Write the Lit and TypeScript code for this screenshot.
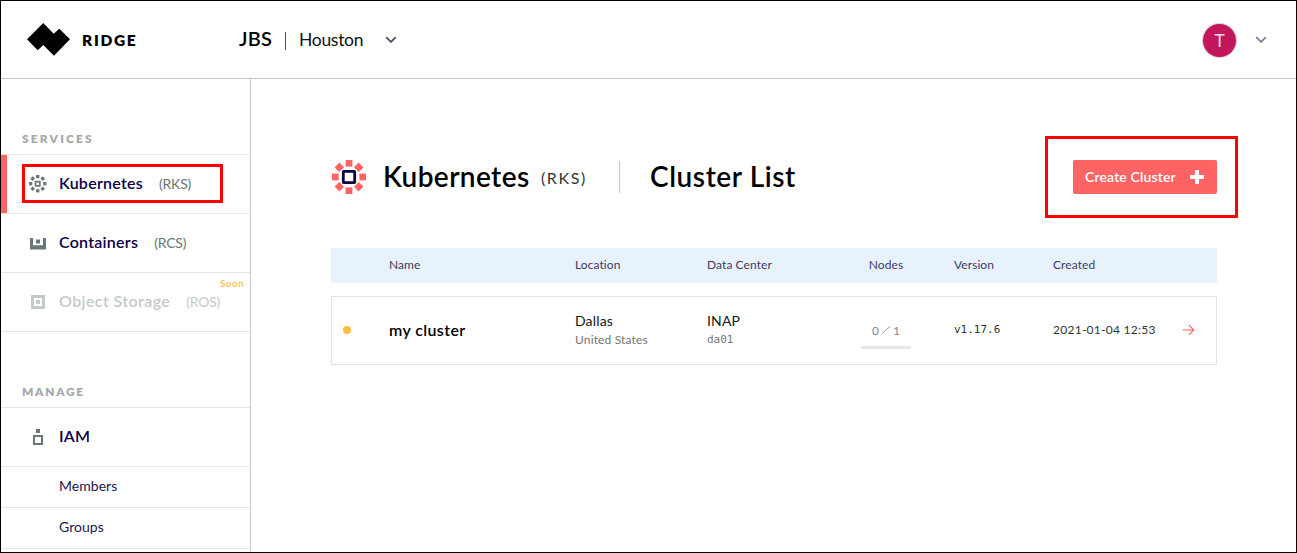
import { LitElement, html, svg, css } from "lit";
import { classMap } from "lit/directives/class-map.js";

const ring = [0, 45, 90, 135, 180, 225, 270, 315];

const chevron = svg`<path d="M1.2 1.2 6 6 10.8 1.2" fill="none" stroke="currentColor" stroke-width="1.9"/>`;

const icons: Record<string, unknown> = {
  kubernetes: html`<svg width="20" height="20" viewBox="0 0 20 20" fill="#6b7879">
    ${ring.map((a) => svg`<rect x="8" y="1" width="3.4" height="3.2" transform="rotate(${a} 9.7 9.7)"/>`)}
    <path fill-rule="evenodd" d="M6.7 6.7h6v6h-6zM8.4 8.4v2.6h2.6V8.4z"/></svg>`,
  containers: html`<svg width="20" height="20" viewBox="0 0 20 20" fill="#6b7879">
    <path d="M2 5h3v7.2h10V5h3v11.4H2z"/><rect x="8" y="6.5" width="4" height="4"/></svg>`,
  storage: html`<svg width="20" height="20" viewBox="0 0 20 20" fill="#c4c9c9">
    <path fill-rule="evenodd" d="M3 3h14v14H3zM6 6v8h8V6z"/><rect x="8" y="8" width="4" height="4"/></svg>`,
  iam: html`<svg width="20" height="20" viewBox="0 0 20 20" fill="#6b7879">
    <rect x="8" y="2" width="4" height="4"/><path fill-rule="evenodd" d="M5 8h10v10H5zM7 10v6h6v-6z"/></svg>`,
};

class AppRoot extends LitElement {
  static styles = css`
    :host { display: block; font-family: Lato, "Open Sans", sans-serif; color: #000; }
    * { box-sizing: border-box; }
    svg { display: block; flex: none; }
    .frame { width: 1297px; height: 553px; border: 1px solid #000; background: #fff; overflow: hidden; display: flex; flex-direction: column; }
    header { height: 78px; flex: none; border-bottom: 1px solid #c6c6c6; display: flex; align-items: center; padding: 0 29px 0 26px; white-space: nowrap; }
    .brand { font-size: 15.5px; font-weight: 800; letter-spacing: 1.7px; margin: 0 0 0 12px; width: 157px; }
    .org { font-size: 20px; font-weight: 600; letter-spacing: .17px; margin-top: -3px; width: 46px; }
    .bar { width: 1px; height: 18px; background: #6b4a10; margin-top: 3px; }
    .site { font-size: 17.5px; letter-spacing: -.3px; margin: -1px 0 0 13px; width: 86px; color: #111; }
    .chev { color: #4d5a6b; }
    .chev.light { color: #7688a0; margin-left: 19px; }
    .avatar { margin-left: auto; width: 33px; height: 33px; border-radius: 50%; background: #c2185b; box-shadow: 0 0 0 1px #d4cdd2; color: #f6dce6; font: 18px/34px Roboto, sans-serif; text-align: center; margin-top: 1px; }
    .body { flex: 1; display: flex; min-height: 0; }
    nav { width: 250px; flex: none; border-right: 1px solid #c6c6c6; overflow: hidden; }
    .group { padding: 52px 0 7px 21px; border-bottom: 1px solid #e6e6e6; font-size: 11.8px; font-weight: 800; line-height: 16px; letter-spacing: 2.25px; color: #a3a9a9; }
    .group.manage { letter-spacing: 1.75px; }
    .item { position: relative; height: 59px; border-bottom: 1px solid #e6e6e6; display: flex; align-items: center; padding-left: 27px; white-space: nowrap; color: #0b0046; }
    .item b { font-size: 16px; font-weight: 600; letter-spacing: .25px; margin: -3px 0 0 11px; }
    .item i { font-style: normal; font-size: 14px; letter-spacing: -.2px; color: #6a7375; margin: -1px 0 0 16px; }
    .item.active::before { content: ""; position: absolute; left: 0; top: 0; width: 6px; height: 58px; background: #ff6464; }
    .item.off, .item.off i { color: #c4c9c9; }
    .item.off b { letter-spacing: .4px; }
    .soon { position: absolute; right: 6px; top: 3px; font-size: 10px; line-height: 14px; font-weight: 600; letter-spacing: .38px; color: #ffbc52; }
    .sub { height: 41px; border-bottom: 1px solid #e6e6e6; padding-left: 58px; font-size: 14px; line-height: 37px; letter-spacing: .04px; color: #1e1550; }
    .mark { position: absolute; border: 3px solid #f00; pointer-events: none; }
    .mark.menu { left: 21px; top: 9px; width: 201px; height: 39px; }
    .mark.cta { inset: -24px -21px -24px -28px; }
    main { flex: 1; padding: 81px 79px 0 80px; }
    .head { display: flex; align-items: center; height: 34px; white-space: nowrap; }
    h1 { margin: 0; font-size: 28px; line-height: 34px; font-weight: 600; letter-spacing: .4px; }
    .title { margin: -2px 0 0 16px; width: 158px; }
    .abbr { font-size: 16px; letter-spacing: 1.6px; color: #333; margin-top: 1px; width: 78px; }
    .split { width: 1px; height: 32px; background: #c9c9c9; margin-right: 30px; }
    .list { letter-spacing: .58px; margin-top: -2px; }
    .cta-wrap { position: relative; margin-left: auto; }
    button { display: flex; align-items: center; justify-content: space-between; width: 144px; height: 34px; padding: 0 13px 0 12px; border: 0; border-radius: 2px; background: #ff6464; color: #fff; font: 600 14px Lato, sans-serif; letter-spacing: .14px; }
    .cta-text { margin-top: -2px; }
    .cols { display: grid; grid-template-columns: 58px 186px 132px 154px 93px 99px 129px 1fr; align-items: center; }
    .thead { margin-top: 54px; height: 35px; padding-bottom: 2px; background: #e8f2fc; font-size: 12px; letter-spacing: .08px; color: #3f3966; }
    .row { margin-top: 13px; height: 69px; padding-bottom: 2px; border: 1px solid #e4e4e4; grid-template-columns: 57px 186px 132px 154px 93px 99px 129px 1fr; }
    .mid { width: 50px; text-align: center; }
    .dot { width: 8px; height: 8px; border-radius: 50%; background: #ffbc40; margin: 1px 0 0 11px; }
    .name { font-size: 16px; font-weight: 600; letter-spacing: .38px; margin-top: -1px; }
    .two { font-size: 14px; line-height: 19px; letter-spacing: .15px; color: #161616; }
    .two small { display: block; font-size: 12px; color: #747474; }
    .two small.mono, .mono { font-family: "DejaVu Sans Mono", monospace; font-size: 11px; letter-spacing: 0; }
    .nodes { display: flex; justify-content: center; align-items: center; gap: 2px; height: 36px; font-size: 12px; color: #858b8b; border-bottom: 3px solid #e6e6e6; padding-top: 2px; margin-top: 2px; }
    .date { font-size: 12px; letter-spacing: .26px; white-space: nowrap; color: #333; }
    .ver { color: #333; }
  `;

  item(icon: string, label: string, abbr: string, state = "") {
    return html`<div class=${classMap({ item: true, active: state === "active", off: state === "off" })}>
      ${icons[icon]}<b>${label}</b>${abbr ? html`<i>${abbr}</i>` : ""}
      ${state === "active" ? html`<span class="mark menu"></span>` : ""}
      ${state === "off" ? html`<span class="soon">Soon</span>` : ""}
    </div>`;
  }

  render() {
    return html`<div class="frame">
      <header>
        <svg width="43" height="33" viewBox="0 0 43 33"><path d="M0 16.3 16.3 0 26.7 10.7 32.3 5.7 43 16.3 27 32.7 16.3 22 10.7 27.3z"/></svg>
        <span class="brand">RIDGE</span>
        <span class="org">JBS</span><span class="bar"></span><span class="site">Houston</span>
        <svg class="chev" width="12" height="8" viewBox="0 0 12 8">${chevron}</svg>
        <span class="avatar">T</span>
        <svg class="chev light" width="12" height="8" viewBox="0 0 12 8">${chevron}</svg>
      </header>
      <div class="body">
        <nav>
          <div class="group">SERVICES</div>
          ${this.item("kubernetes", "Kubernetes", "(RKS)", "active")}
          ${this.item("containers", "Containers", "(RCS)")}
          ${this.item("storage", "Object Storage", "(ROS)", "off")}
          <div class="group manage">MANAGE</div>
          ${this.item("iam", "IAM", "")}
          <div class="sub">Members</div>
          <div class="sub">Groups</div>
        </nav>
        <main>
          <div class="head">
            <svg width="36" height="36" viewBox="0 0 36 36" fill="#ff6464">
              ${ring.map((a) => svg`<rect x="14.6" y="1" width="6.8" height="6.6" transform="rotate(${a} 18 18)"/>`)}
              <rect x="12.3" y="12.3" width="11.4" height="11.4" rx=".4" fill="#fff" stroke="#0b0046" stroke-width="2.8"/>
            </svg>
            <h1 class="title">Kubernetes</h1><span class="abbr">(RKS)</span>
            <span class="split"></span>
            <h1 class="list">Cluster List</h1>
            <div class="cta-wrap">
              <button><span class="cta-text">Create Cluster</span>
                <svg width="14" height="14" viewBox="0 0 14 14"><path d="M5 0h4v5h5v4H9v5H5V9H0V5h5z" fill="#fff"/></svg>
              </button>
              <span class="mark cta"></span>
            </div>
          </div>
          <div class="cols thead">
            <span></span><span>Name</span><span>Location</span><span>Data Center</span>
            <span class="mid">Nodes</span><span>Version</span><span>Created</span><span></span>
          </div>
          <div class="cols row">
            <span class="dot"></span>
            <span class="name">my cluster</span>
            <div class="two">Dallas<small>United States</small></div>
            <div class="two">INAP<small class="mono">da01</small></div>
            <div class="mid nodes"><span>0</span>
              <svg width="10" height="8" viewBox="0 0 10 8"><path d="M1 7.5 9 .5" stroke="#9a9f9f" stroke-width="1"/></svg>
              <span>1</span></div>
            <span class="mono ver">v1.17.6</span>
            <span class="date">2021-01-04 12:53</span>
            <svg width="13" height="12" viewBox="0 0 13 12"><path d="M.5 6h11M7 1.2 11.8 6 7 10.8" fill="none" stroke="#ff6464" stroke-width="1.2"/></svg>
          </div>
        </main>
      </div>
    </div>`;
  }
}
customElements.define("app-root", AppRoot);
